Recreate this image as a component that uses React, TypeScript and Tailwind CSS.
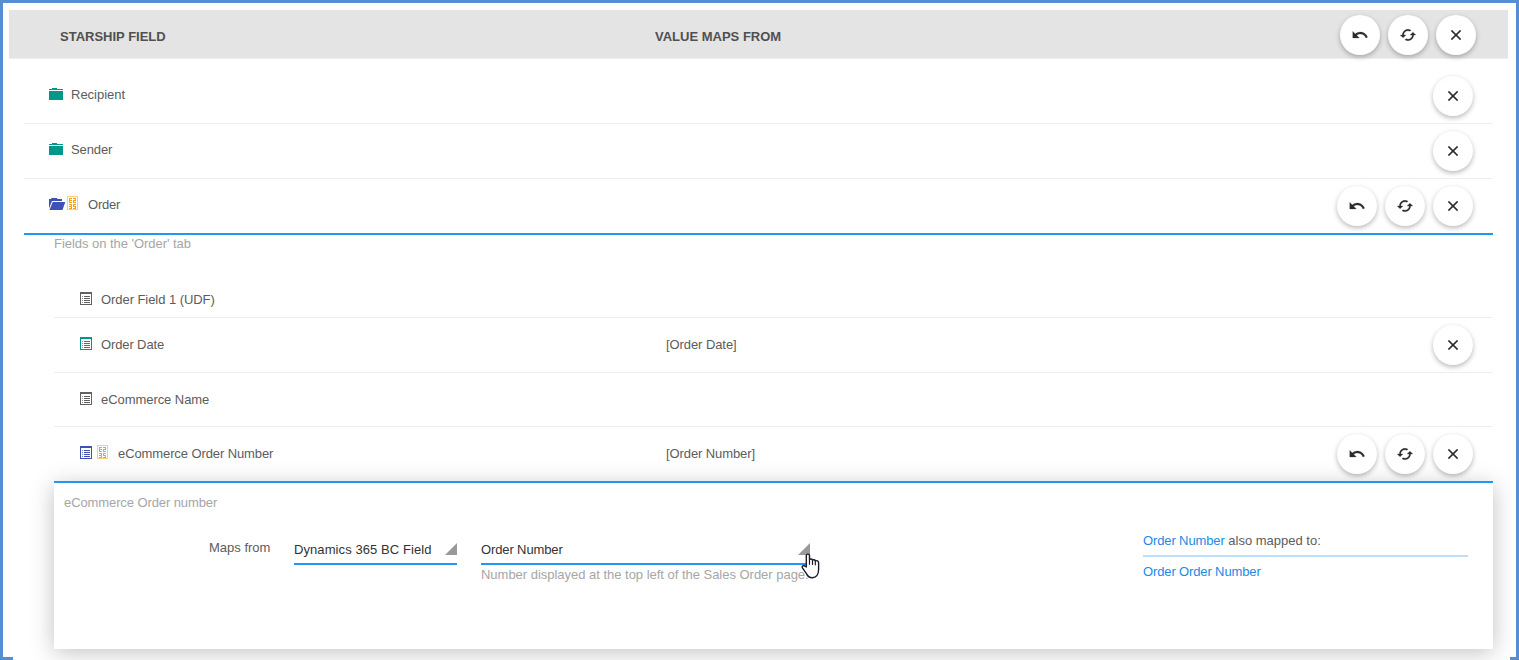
import React from "react";

type Tone = "gray" | "teal" | "indigo";

const toneClass: Record<Tone, string> = {
  gray: "text-[#616161]",
  teal: "text-[#009688]",
  indigo: "text-[#3f51b5]",
};

const glyphs = {
  undo: "M12.5 8c-2.65 0-5.05.99-6.9 2.6L2 7v9h9l-3.62-3.62c1.39-1.16 3.16-1.88 5.12-1.88 3.54 0 6.55 2.31 7.6 5.5l2.37-.78C21.08 11.03 17.15 8 12.5 8z",
  cached:
    "M19 8l-4 4h3c0 3.31-2.69 6-6 6-1.01 0-1.97-.25-2.8-.7l-1.46 1.46C8.97 19.54 10.43 20 12 20c4.42 0 8-3.58 8-8h3l-4-4zM6 12c0-3.31 2.69-6 6-6 1.01 0 1.97.25 2.8.7l1.46-1.46C15.03 4.46 13.57 4 12 4c-4.42 0-8 3.58-8 8H1l4 4 4-4H6z",
  close:
    "M19 6.41L17.59 5 12 10.59 6.41 5 5 6.41 10.59 12 5 17.59 6.41 19 12 13.41 17.59 19 19 17.59 13.41 12z",
};

const glyphBox = {
  undo: "-0.5 -0.5 25 25",
  cached: "-0.75 -0.75 25.5 25.5",
  close: "-0.5 -0.5 25 25",
};

function RoundButton({ icon }: { icon: keyof typeof glyphs }) {
  return (
    <button
      aria-label={icon}
      className="flex size-10 shrink-0 items-center justify-center rounded-full bg-white text-[#2b2b2b] shadow-[0_2px_5px_rgba(0,0,0,0.28)]"
    >
      <svg viewBox={glyphBox[icon]} className="mb-px size-[18px]" fill="currentColor" stroke="currentColor" strokeWidth="0.4">
        <path d={glyphs[icon]} />
      </svg>
    </button>
  );
}

function Actions({ all }: { all?: boolean }) {
  return (
    <div className="ml-auto flex gap-2">
      {all && <RoundButton icon="undo" />}
      {all && <RoundButton icon="cached" />}
      <RoundButton icon="close" />
    </div>
  );
}

function FolderIcon() {
  return (
    <svg width="14" height="12" viewBox="0 0 14 12" shapeRendering="crispEdges" className="mb-1 text-[#009688]" fill="currentColor">
      <path d="M3 0h5v1h6v1H0V1h3zM0 3h14v9H0z" />
    </svg>
  );
}

function FolderOpenIcon() {
  return (
    <svg width="17" height="12" viewBox="0 0 17 12" className="mb-1 text-[#3f51b5]" fill="currentColor">
      <path d="M2.5 0H8l.5 1H13v2H3L0 10.500V1h2z" />
      <path d="M3.700 4H16.300L13.500 12H.5z" />
    </svg>
  );
}

function CodeIcon() {
  return (
    <svg width="11" height="14" viewBox="0 0 11 14" shapeRendering="crispEdges">
      <path d="M0 0h11v14H0zM1 1v12h9V1z" fill="#ffcc80" fillRule="evenodd" />
      <path
        fill="#fb9f14"
        d="M2 2h3v1H3v1h2v1H3v1h2v1H2zM6 2h3v3H7v1h2v1H6V4h2V3H6zM2 8h3v5H2v-1h2v-1H2v-1h2V9H2zM6 8h3v1H7v1h2v3H6v-1h2v-1H6z"
      />
    </svg>
  );
}

function ListIcon({ tone }: { tone: Tone }) {
  return (
    <svg width="12" height="13" viewBox="0 0 12 13" shapeRendering="crispEdges" className={toneClass[tone]} fill="currentColor">
      <path d="M0 0h12v13H0zM1 2v10h10V2z" fillRule="evenodd" />
      <path d="M4 4h6v1H4zM4 6h6v1H4zM4 8h6v1H4zM4 10h6v1H4z" />
      <path d="M2 4h1v1H2zM2 6h1v1H2zM2 8h1v1H2zM2 10h1v1H2z" opacity=".7" />
    </svg>
  );
}

function SelectBox({ value, className }: { value: string; className: string }) {
  return (
    <div className={`flex h-[26px] items-start justify-between border-b-2 border-[#2196f3] text-[#333] ${className}`}>
      <span className="mt-px leading-5">{value}</span>
      <svg width="12" height="12" viewBox="0 0 12 12" className="mt-1" fill="#999">
        <path d="M12 0v12H0z" />
      </svg>
    </div>
  );
}

function HandCursor() {
  return (
    <svg width="19" height="26" viewBox="0 0 19 26" className="absolute left-[320px] top-[14px]" fill="#fff" stroke="#1b1b2b" strokeWidth="1.4" strokeLinejoin="round" strokeLinecap="round">
      <path d="M5.300 14V2.600c0-2 3.200-2 3.200 0V6.600c.8-1 2.800-.7 3 .6.900-.9 2.600-.5 2.800.7 1.400-.7 3.300.1 3.300 1.700v7c0 5-2.500 8.100-6.300 8.100-3.500 0-4.800-1.700-5.900-4.100l-3.800-5.400c-1.200-2 1-3.400 2.400-2z" />
      <path d="M8.500 6.800v4.400M11.500 7.500v3.900M14.300 8.300v3.500" fill="none" strokeWidth="1.200" />
    </svg>
  );
}

export default function App() {
  return (
    <div className="relative flex h-[660px] w-full flex-col overflow-hidden border-x-[3px] border-t-[3px] border-[#558ed5] bg-white font-['Liberation_Sans',Arial,sans-serif] text-[13px] leading-5 text-[#5c5c5c]">
      <header className="ml-1.5 mr-2 mt-[7px] flex h-[49px] shrink-0 items-center border-b border-[#eee] bg-[#e4e4e4] pl-[51px] pr-8 font-bold text-[#505050]">
        <span className="mt-1.5 w-[595px]">STARSHIP FIELD</span>
        <span className="mt-1.5">VALUE MAPS FROM</span>
        <div className="ml-auto mt-0.5 flex">
          <Actions all />
        </div>
      </header>

      <main className="ml-[21px] mr-[23px] mt-2.5">
        <div className="flex h-[55px] items-center border-b border-[#eee] pl-[25px] pr-5">
          <FolderIcon />
          <span className="mb-[3px] ml-2">Recipient</span>
          <Actions />
        </div>
        <div className="flex h-[55px] items-center border-b border-[#eee] pl-[25px] pr-5">
          <FolderIcon />
          <span className="mb-[3px] ml-2 tracking-[-0.1px]">Sender</span>
          <Actions />
        </div>
        <div className="flex h-14 items-center border-b-2 border-[#2196f3] pl-[25px] pr-5">
          <FolderOpenIcon />
          <div className="mb-1.5 ml-px">
            <CodeIcon />
          </div>
          <span className="mb-[3px] ml-2.5 tracking-[-0.2px]">Order</span>
          <Actions all />
        </div>

        <section className="ml-[30px]">
          <p className="h-12 leading-[18px] tracking-[-0.04px] text-[#a6a6a6]">Fields on the 'Order' tab</p>

          <div className="flex h-[35px] items-center border-b border-[#eee] pl-[26px]">
            <div className="mb-[3px]">
              <ListIcon tone="gray" />
            </div>
            <span className="mb-px ml-[9px] tracking-[-0.06px]">Order Field 1 (UDF)</span>
          </div>
          <div className="flex h-[55px] items-center border-b border-[#eee] pl-[26px] pr-5">
            <div className="mb-[3px]">
              <ListIcon tone="teal" />
            </div>
            <span className="mb-px ml-[9px] w-[565px] tracking-[-0.12px]">Order Date</span>
            <span className="mb-px tracking-[-0.08px]">[Order Date]</span>
            <Actions />
          </div>
          <div className="flex h-[54px] items-center border-b border-[#eee] pl-[26px]">
            <div className="mb-0.5">
              <ListIcon tone="gray" />
            </div>
            <span className="ml-[9px] tracking-[-0.06px]">eCommerce Name</span>
          </div>
          <div className="relative z-10 flex h-14 items-center border-b-2 border-[#2196f3] pl-[26px] pr-5">
            <div className="mb-[3px]">
              <ListIcon tone="indigo" />
            </div>
            <div className="mb-1 ml-[5px]">
              <CodeIcon />
            </div>
            <span className="mb-px ml-2.5 w-[548px] tracking-[-0.1px]">eCommerce Order Number</span>
            <span className="mb-px tracking-[-0.1px]">[Order Number]</span>
            <Actions all />
          </div>

          <div className="h-[166px] bg-white px-2.5 pt-2.5 shadow-[0_3px_22px_rgba(0,0,0,0.25)]">
            <p className="tracking-[-0.1px] text-[#a6a6a6]">eCommerce Order number</p>
            <div className="mt-[26px] flex items-start">
              <span className="-mt-px ml-[145px] w-[85px]">Maps from</span>
              <SelectBox value="Dynamics 365 BC Field" className="mr-6 w-[163px] tracking-[0.08px]" />
              <div className="relative">
                <SelectBox value="Order Number" className="w-[329px] tracking-[-0.12px]" />
                <p className="whitespace-nowrap tracking-[-0.02px] text-[#a6a6a6]">Number displayed at the top left of the Sales Order page.</p>
                <HandCursor />
              </div>
              <div className="ml-auto mr-[15px] mt-[-8px] w-[325px] text-[#2389e6]">
                <p className="h-[26px] border-b-2 border-[#bbdefb]">
                  <span className="tracking-[-0.12px]">Order Number</span> <span className="text-[#5c5c5c]">also mapped to:</span>
                </p>
                <p className="mt-[5px] tracking-[-0.13px]">Order Order Number</p>
              </div>
            </div>
          </div>
        </section>
      </main>

      <div className="absolute inset-x-0 bottom-0 flex h-[3px] justify-between">
        <span className="w-2.5 bg-[#558ed5]" />
        <span className="w-1.5 bg-[#558ed5]" />
      </div>
    </div>
  );
}
